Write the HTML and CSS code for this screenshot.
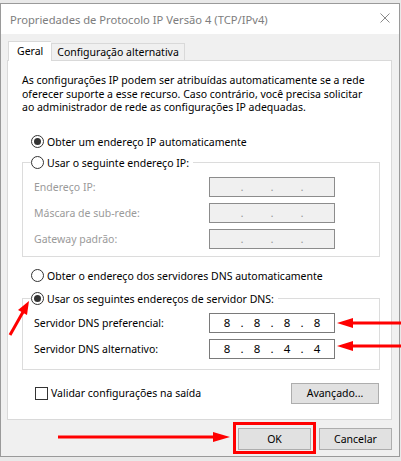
FILE: index.html
```html
<!DOCTYPE html>
<html lang="pt-BR">
<head>
    <meta charset="UTF-8">
    <title>Propriedades de Protocolo IP Versão 4 (TCP/IPv4)</title>
    <link rel="stylesheet" href="styles.css">
</head>
<body>
    <div class="window">
        <div class="titlebar">
            <span class="title">Propriedades de Protocolo IP Versão 4 (TCP/IPv4)</span>
            <svg class="close" width="10" height="10" viewBox="0 0 10 10">
                <path d="M0.5 0.5 L9.5 9.5 M9.5 0.5 L0.5 9.5" stroke="#8a8a8a" stroke-width="1" fill="none"/>
            </svg>
        </div>

        <div class="body">
            <div class="tabs">
                <div class="tab active">Geral</div>
                <div class="tab">Configuração alternativa</div>
            </div>

            <div class="panel">
                <p class="intro">As configurações IP podem ser atribuídas automaticamente se a rede<br>oferecer suporte a esse recurso. Caso contrário, você precisa solicitar<br>ao administrador de rede as configurações IP adequadas.</p>

                <div class="option first">
                    <span class="radio checked"></span>Obter um endereço IP automaticamente
                </div>

                <fieldset class="group">
                    <legend><span class="radio"></span>Usar o seguinte endereço IP:</legend>
                    <div class="field-row disabled">
                        <span class="label">Endereço IP:</span>
                        <span class="ip"><i></i><b>.</b><i></i><b>.</b><i></i><b>.</b><i></i></span>
                    </div>
                    <div class="field-row disabled">
                        <span class="label">Máscara de sub-rede:</span>
                        <span class="ip"><i></i><b>.</b><i></i><b>.</b><i></i><b>.</b><i></i></span>
                    </div>
                    <div class="field-row disabled">
                        <span class="label">Gateway padrão:</span>
                        <span class="ip"><i></i><b>.</b><i></i><b>.</b><i></i><b>.</b><i></i></span>
                    </div>
                </fieldset>

                <div class="option dns-auto">
                    <span class="radio"></span>Obter o endereço dos servidores DNS automaticamente
                </div>

                <fieldset class="group dns">
                    <legend><span class="radio checked"></span>Usar os seguintes endereços de servidor DNS:</legend>
                    <div class="field-row">
                        <span class="label">Servidor DNS preferencial:</span>
                        <span class="ip"><i>8</i><b>.</b><i>8</i><b>.</b><i>8</i><b>.</b><i>8</i></span>
                    </div>
                    <div class="field-row">
                        <span class="label">Servidor DNS alternativo:</span>
                        <span class="ip"><i>8</i><b>.</b><i>8</i><b>.</b><i>4</i><b>.</b><i>4</i></span>
                    </div>
                </fieldset>

                <div class="validate-row">
                    <label class="check"><span class="box"></span>Validar configurações na saída</label>
                    <button class="btn advanced">Avançado...</button>
                </div>
            </div>

            <div class="footer">
                <button class="btn">OK</button>
                <button class="btn">Cancelar</button>
            </div>
        </div>
    </div>

    <!-- red annotations drawn over the dialog -->
    <svg class="marks" width="401" height="461" viewBox="0 0 401 461">
        <g fill="#f00" stroke="#f00">
            <line x1="58" y1="437" x2="216" y2="437" stroke-width="3"/>
            <polygon points="213,432 230,437 213,442" stroke="none"/>
            <line x1="401" y1="323" x2="350" y2="323" stroke-width="3"/>
            <polygon points="353,318 337,323 353,328" stroke="none"/>
            <line x1="401" y1="346" x2="350" y2="346" stroke-width="3"/>
            <polygon points="353,341 337,346 353,351" stroke="none"/>
            <line x1="10" y1="335" x2="23" y2="312" stroke-width="3"/>
            <polygon points="29,301 27,315 18,310" stroke="none"/>
            <rect x="234.5" y="423.5" width="80" height="29" fill="none" stroke-width="3"/>
        </g>
    </svg>
</body>
</html>
```

FILE: styles.css
```css
body {
    margin: 0;
    width: 401px;
    height: 461px;
    background-color: #e9e9e9;
    font-family: "Noto Sans", "Open Sans", sans-serif;
    font-size: 10.5px;
    color: #000;
    position: relative;
    overflow: hidden;
}
.window {
    margin-top: 3px;
    width: 398px;
    border: 1px solid #9a9a9a;
    background: #f0f0f0;
}
.titlebar {
    height: 30px;
    background: white;
    display: flex;
    align-items: center;
    justify-content: space-between;
    padding: 0 9px 0 9px;
}
.title {
    color: #7d7d7d;
    font-size: 11.2px;
}
.close {
    margin-top: -2px;
}
.body {
    padding: 7px 7px 6px 6px;
}
.tabs {
    display: flex;
    align-items: flex-end;
    margin-left: 1px;
    margin-bottom: -1px;
    height: 20px;
}
.tab {
    box-sizing: border-box;
    height: 18px;
    padding: 0 5px;
    line-height: 16px;
    border: 1px solid #d9d9d9;
    background: #f0f0f0;
}
.tab.active {
    height: 20px;
    padding: 0 8px;
    line-height: 19px;
    border-bottom: none;
    border-right: none;
    background: white;
    position: relative;
    z-index: 1;
}
.panel {
    background: white;
    border: 1px solid #d9d9d9;
    height: 358px;
    padding: 0 11px 0 14px;
}
.intro {
    margin: 13px 0 0 0;
    line-height: 13.5px;
    white-space: nowrap;
}
.option {
    display: flex;
    align-items: center;
    height: 16px;
    padding-left: 9px;
}
.option.first {
    margin-top: 19px;
}
.option.dns-auto {
    margin-top: 11px;
}
.radio {
    box-sizing: border-box;
    width: 13px;
    height: 13px;
    border: 1px solid #333;
    border-radius: 50%;
    margin-right: 3px;
    display: inline-flex;
    align-items: center;
    justify-content: center;
    background: white;
    flex-shrink: 0;
}
.radio.checked::after {
    content: "";
    width: 7px;
    height: 7px;
    border-radius: 50%;
    background: #333;
}
.group {
    margin: 5px 0 0 0;
    width: 358px;
    box-sizing: border-box;
    border: 1px solid #dcdcdc;
    padding: 0 0 7px 11px;
}
.group legend {
    display: flex;
    align-items: center;
    height: 16px;
    line-height: 16px;
    padding: 0 4px 0 0;
    margin-left: -3px;
}
.group.dns {
    margin-top: 7px;
    padding-bottom: 10px;
}
.field-row {
    display: flex;
    align-items: center;
    height: 20px;
    margin-top: 6px;
}
.label {
    width: 175px;
}
.ip {
    box-sizing: border-box;
    width: 126px;
    height: 20px;
    border: 1px solid #7a7a7a;
    background: white;
    display: flex;
    justify-content: center;
    align-items: center;
    padding-bottom: 1px;
    font-size: 11.5px;
}
.ip i {
    font-style: normal;
    width: 22px;
    text-align: center;
}
.ip b {
    font-weight: normal;
    width: 8px;
    text-align: center;
}
.field-row.disabled .label {
    color: #9a9a9a;
}
.field-row.disabled .ip {
    background: #f0f0f0;
    border-color: #8c8c8c;
    color: #9a9a9a;
}
.validate-row {
    display: flex;
    justify-content: space-between;
    align-items: center;
    width: 357px;
    margin-top: 13px;
}
.check {
    display: flex;
    align-items: center;
    padding-left: 13px;
}
.box {
    box-sizing: border-box;
    width: 13px;
    height: 13px;
    border: 1px solid #333;
    margin-right: 3px;
    background: white;
}
.btn {
    box-sizing: border-box;
    height: 22px;
    width: 73px;
    padding: 0;
    background: #e1e1e1;
    border: 1px solid #adadad;
    font-family: inherit;
    font-size: 10.5px;
    color: #000;
}
.btn.advanced {
    width: 88px;
    height: 21px;
}
.footer {
    display: flex;
    justify-content: flex-end;
    gap: 8px;
    margin-top: 8px;
}
.marks {
    position: absolute;
    left: 0;
    top: 0;
}
```
